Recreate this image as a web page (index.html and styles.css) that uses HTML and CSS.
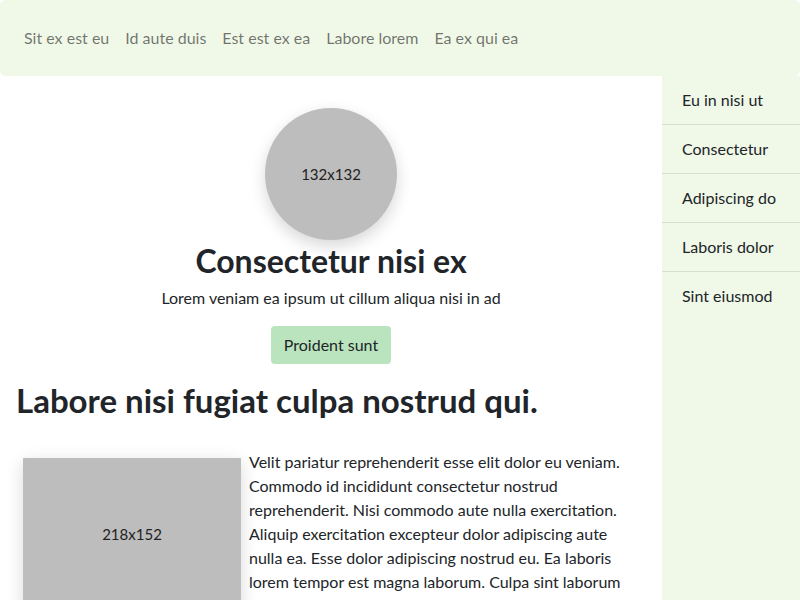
FILE: index.html
```html
<!DOCTYPE html>
<html>
<head>
<meta charset="utf-8">
<title>Page</title>
<link rel="stylesheet" href="styles.css">
</head>
<body>
<nav class="navbar">
  <a class="nav-link" href="#">Sit ex est eu</a>
  <a class="nav-link" href="#">Id aute duis</a>
  <a class="nav-link" href="#">Est est ex ea</a>
  <a class="nav-link" href="#">Labore lorem</a>
  <a class="nav-link" href="#">Ea ex qui ea</a>
</nav>
<div class="layout">
  <main class="main">
    <section class="hero">
      <div class="avatar">132x132</div>
      <h2 class="hero-title">Consectetur nisi ex</h2>
      <p class="hero-text">Lorem veniam ea ipsum ut cillum aliqua nisi in ad</p>
      <button class="btn">Proident sunt</button>
    </section>
    <h1 class="section-title">Labore nisi fugiat culpa nostrud qui.</h1>
    <section class="media">
      <div class="thumb">218x152</div>
      <p class="media-text">Velit pariatur reprehenderit esse elit dolor eu veniam. Commodo id incididunt consectetur nostrud reprehenderit. Nisi commodo aute nulla exercitation. Aliquip exercitation excepteur dolor adipiscing aute nulla ea. Esse dolor adipiscing nostrud eu. Ea laboris lorem tempor est magna laborum. Culpa sint laborum qui ad in. Ad aliqua duis sint nostrud nulla.</p>
    </section>
  </main>
  <aside class="sidebar">
    <a class="side-item" href="#">Eu in nisi ut</a>
    <a class="side-item" href="#">Consectetur</a>
    <a class="side-item" href="#">Adipiscing do</a>
    <a class="side-item" href="#">Laboris dolor</a>
    <a class="side-item" href="#">Sint eiusmod</a>
  </aside>
</div>
</body>
</html>
```
FILE: styles.css
```css
* { box-sizing: border-box; }
html, body { height: 100%; }
body {
  margin: 0;
  font-family: Lato, "Liberation Sans", sans-serif;
  font-size: 16px;
  line-height: 24px;
  color: #212529;
  background: #fff;
  overflow: hidden;
}
.navbar {
  display: flex;
  align-items: center;
  height: 76px;
  padding: 0 16px;
  background: #f0f8e8;
  border-radius: 6px;
}
.nav-link {
  padding: 8px 8px;
  color: rgba(0, 0, 0, 0.55);
  text-decoration: none;
}
.layout {
  display: flex;
  align-items: stretch;
  min-height: calc(100% - 76px);
}
.main {
  flex: 0 0 662px;
  padding: 0 16px;
}
.sidebar {
  flex: 1;
  display: flex;
  flex-direction: column;
  background: #f0f8e8;
}
.side-item {
  padding: 12px 20px;
  color: #212529;
  text-decoration: none;
  border-bottom: 1px solid #d5dfd0;
}
.side-item:last-child { border-bottom: none; }
.hero {
  display: flex;
  flex-direction: column;
  align-items: center;
  padding-top: 32px;
}
.avatar {
  width: 132px;
  height: 132px;
  border-radius: 50%;
  background: #bdbdbd;
  display: flex;
  align-items: center;
  justify-content: center;
  font-size: 15px;
  color: #222;
  box-shadow: 0 6px 16px rgba(0, 0, 0, 0.16);
}
.hero-title {
  margin: 2px 0 6px;
  font-size: 32px;
  line-height: 38px;
  font-weight: 700;
}
.hero-text {
  margin: 0 0 16px;
}
.btn {
  font: inherit;
  color: #212529;
  background: #b9e4bd;
  border: none;
  border-radius: 4px;
  padding: 7px 13px;
  line-height: 24px;
}
.section-title {
  margin: 16px 0 0;
  font-size: 33px;
  line-height: 40px;
  font-weight: 700;
}
.media {
  display: flex;
  align-items: flex-start;
  margin-top: 30px;
}
.thumb {
  flex: 0 0 218px;
  height: 152px;
  margin: 8px 8px 0 7px;
  background: #bdbdbd;
  display: flex;
  align-items: center;
  justify-content: center;
  font-size: 15px;
  color: #222;
  box-shadow: 0 4px 16px rgba(0, 0, 0, 0.15);
}
.media-text {
  margin: 0 10px 0 0;
  flex: 1;
}
```
